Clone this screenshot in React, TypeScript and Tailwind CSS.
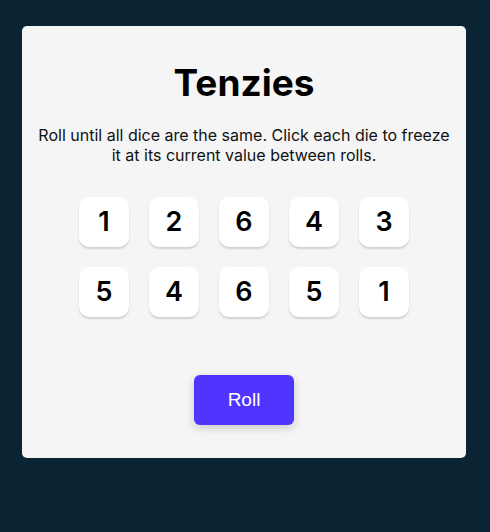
import React from "react";

const dice = [1, 2, 6, 4, 3, 5, 4, 6, 5, 1];

export default function App() {
  return (
    <div className="min-h-[532px] w-full bg-[#0B2434] pt-[26px] px-[22px]" style={{ fontFamily: "Inter, 'Noto Sans', sans-serif" }}>
      <div className="h-[432px] w-[444px] rounded-[5px] bg-[#F5F5F5] flex flex-col items-center pt-[37px]">
        <h1 className="text-[37px] leading-[40px] font-bold text-black">Tenzies</h1>
        <p className="mt-[22px] text-[16px] leading-[20px] text-center text-[#111] px-[14px]">
          Roll until all dice are the same. Click each die to freeze it at its current value between rolls.
        </p>
        <div className="mt-[32px] grid grid-cols-5 gap-5">
          {dice.map((d, i) => (
            <div
              key={i}
              className="w-[50px] h-[50px] rounded-[10px] bg-white flex items-center justify-center text-[27px] font-semibold text-black shadow-[0_2px_2px_rgba(0,0,0,0.15)]"
            >
              {d}
            </div>
          ))}
        </div>
        <button
          className="mt-[58px] w-[100px] h-[50px] rounded-[6px] bg-[#5035FF] text-white text-[19px] shadow-[0_3px_8px_rgba(0,0,0,0.18)]"
          style={{ fontFamily: "'Liberation Sans', Arial, sans-serif" }}
        >
          Roll
        </button>
      </div>
    </div>
  );
}
